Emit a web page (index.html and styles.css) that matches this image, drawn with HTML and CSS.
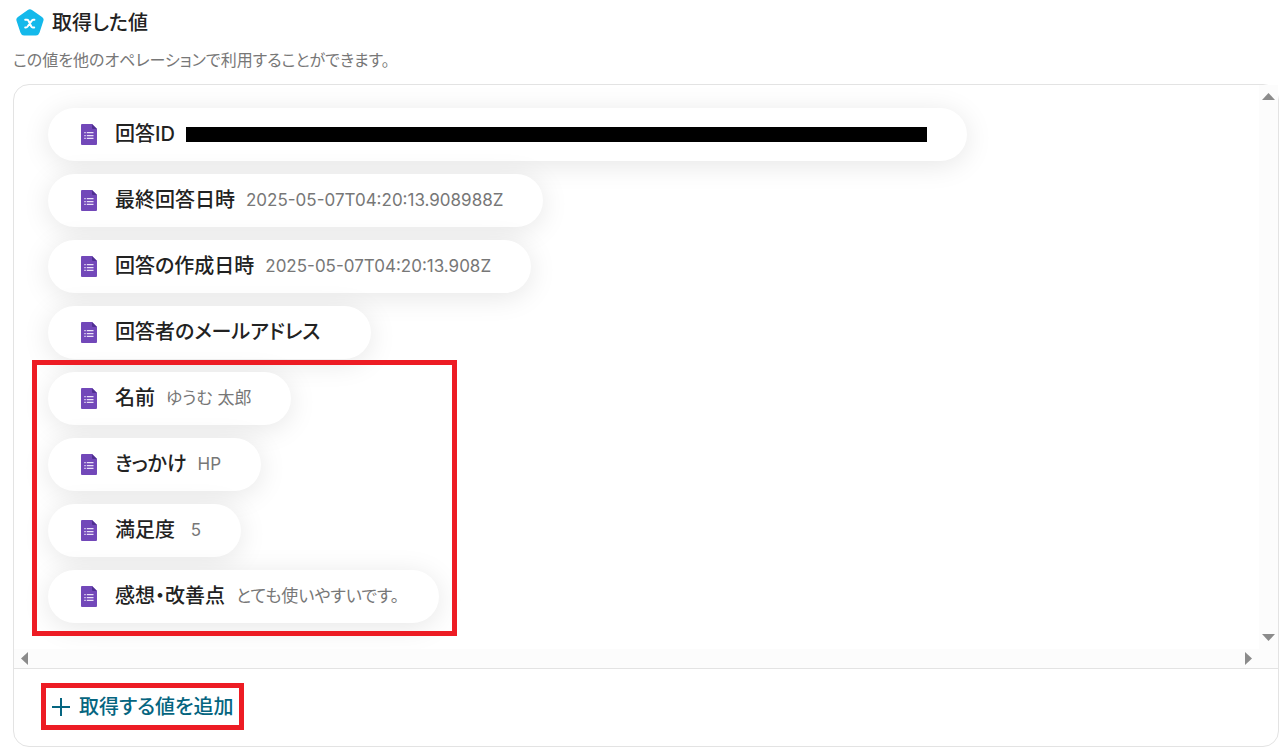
FILE: index.html
```html
<!DOCTYPE html>
<html lang="ja">
<head>
<meta charset="utf-8">
<meta name="viewport" content="width=device-width, initial-scale=1">
<title>取得した値</title>
<link rel="stylesheet" href="styles.css">
</head>
<body>
<svg class="sprite" aria-hidden="true">
  <symbol id="form" viewBox="0 0 16 21">
    <path fill="#7248b9" d="M1.300 0H11l5 5v14.700c0 .8-.5 1.300-1.300 1.300H1.300C.5 21 0 20.500 0 19.700V1.300C0 .5.5 0 1.300 0z"/>
    <path fill="#4f2f91" d="M11 0l5 5h-3.700C11.500 5 11 4.500 11 3.700z"/>
    <path fill="#e9dff7" d="M3.300 8h1.400v1.300H3.300zM5.800 8h6.700v1.300H5.800zM3.300 10.900h1.400v1.300H3.300zM5.800 10.900h6.700v1.300H5.800zM3.300 13.800h1.400v1.300H3.300zM5.800 13.800h6.700v1.300H5.800z"/>
  </symbol>
</svg>
<main class="page">
  <header class="head">
    <svg class="logo" viewBox="0 0 28 27" aria-hidden="true">
      <path fill="#14b9eb" d="M11.800.900Q13.900-.600 16 .900L26 7.900Q28.200 9.400 27.400 11.700L23.500 23.800Q22.600 26.500 20 26.500H8Q5.400 26.500 4.500 23.800L.5 11.700Q-.2 9.400 1.900 7.900z"/>
      <path fill="none" stroke="#fff" stroke-width="2" stroke-linecap="round" stroke-linejoin="round" d="M9.200 10.700H11Q11.900 10.700 12.400 11.600L15.300 17.500Q15.800 18.400 16.700 18.400H18.200M18.400 10.700H17.500Q16.500 10.700 15.800 11.600L11.600 17.500Q10.900 18.400 9.900 18.400H9.200"/>
    </svg>
    <h1 class="title">取得した値</h1>
  </header>
  <p class="lead">この値を他のオペレーションで利用することができます。</p>
  <section class="panel">
    <div class="viewer">
      <div class="content">
        <div class="pill"><svg class="icon"><use href="#form"/></svg><span class="name">回答ID</span><span class="masked"></span></div>
        <div class="pill"><svg class="icon"><use href="#form"/></svg><span class="name">最終回答日時</span><span class="value">2025-05-07T04:20:13.908988Z</span></div>
        <div class="pill"><svg class="icon"><use href="#form"/></svg><span class="name">回答の作成日時</span><span class="value">2025-05-07T04:20:13.908Z</span></div>
        <div class="pill"><svg class="icon"><use href="#form"/></svg><span class="name">回答者のメールアドレス</span><span class="value"></span></div>
        <div class="group">
          <div class="pill"><svg class="icon"><use href="#form"/></svg><span class="name">名前</span><span class="value">ゆうむ 太郎</span></div>
          <div class="pill"><svg class="icon"><use href="#form"/></svg><span class="name">きっかけ</span><span class="value">HP</span></div>
          <div class="pill"><svg class="icon"><use href="#form"/></svg><span class="name">満足度</span><span class="value">&nbsp;5</span></div>
          <div class="pill"><svg class="icon"><use href="#form"/></svg><span class="name">感想・改善点</span><span class="value">とても使いやすいです。</span></div>
        </div>
      </div>
      <div class="bar bar-y" aria-hidden="true">
        <svg class="arrow" viewBox="0 0 13 13"><path d="M6.500 3l6.500 7H0z"/></svg>
        <svg class="arrow" viewBox="0 0 13 13"><path d="M6.500 10l6.500-7H0z"/></svg>
      </div>
      <div class="bar bar-x" aria-hidden="true">
        <svg class="arrow" viewBox="0 0 13 13"><path d="M3 6.500L10 0v13z"/></svg>
        <svg class="arrow" viewBox="0 0 13 13"><path d="M10 6.500L3 0v13z"/></svg>
      </div>
      <div class="bar"></div>
    </div>
    <footer class="foot">
      <button class="add" type="button"><svg class="plus" viewBox="0 0 18 18" aria-hidden="true"><path d="M9 0v18M0 9h18"/></svg>取得する値を追加</button>
    </footer>
  </section>
</main>
</body>
</html>
```
FILE: styles.css
```css
* { box-sizing: border-box; }
body {
  margin: 0;
  background: #fff;
  color: #222;
  font-family: Inter, "Noto Sans CJK JP", sans-serif;
  font-feature-settings: "palt";
}
.sprite { position: absolute; width: 0; height: 0; }
.page { padding: 8px 7px 5px 13px; }
.head { display: flex; align-items: center; gap: 8px; padding-left: 3px; height: 29px; }
.logo { width: 28px; height: 27px; }
.title { margin: 0; font-size: 20px; line-height: 28px; font-weight: 500; }
.lead { margin: 13px 0 14px; font-size: 16px; line-height: 20px; color: #777; }
.panel { border: 1px solid #e3e3e3; border-radius: 16px; }
.viewer { display: grid; grid-template-columns: 1fr 19px; grid-template-rows: auto 19px; }
.content {
  display: flex;
  flex-direction: column;
  align-items: flex-start;
  gap: 13px;
  min-width: 0;
  padding: 23px 34px 26px;
  overflow: hidden;
  border-radius: 16px 0 0 0;
}
.group {
  position: relative;
  display: flex;
  flex-direction: column;
  align-items: flex-start;
  gap: 13px;
}
.group::after {
  content: "";
  position: absolute;
  inset: -12px -18px -13px -16px;
  border: 5px solid #ed1c24;
}
.pill {
  display: flex;
  align-items: center;
  gap: 11px;
  height: 53px;
  padding: 0 40px 0 33px;
  border-radius: 27px;
  background: #fff;
  box-shadow: 0 4px 28px rgba(0, 0, 0, 0.1);
  white-space: nowrap;
}
.icon { width: 16px; height: 21px; margin-right: 7px; }
.name { padding-bottom: 1px; font-size: 20px; line-height: 28px; font-weight: 500; }
.value { padding-bottom: 2px; font-size: 17px; line-height: 24px; color: #777; }
.masked { width: 741px; height: 15px; background: #000; }
.bar { display: flex; justify-content: space-between; align-items: center; background: #fcfcfc; }
.bar-y { flex-direction: column; padding: 5px 0; }
.bar-x { padding: 0 4px; }
.arrow { width: 13px; height: 13px; fill: #8b8b8b; }
.foot { border-top: 1px solid #e3e3e3; padding: 14px 27px 16px; }
.add {
  display: flex;
  align-items: center;
  gap: 9px;
  height: 47px;
  padding: 0 6px;
  border: 5px solid #ed1c24;
  background: #fff;
  color: #056580;
  font: inherit;
  font-size: 20px;
  font-weight: 500;
  line-height: 28px;
}
.plus { width: 18px; height: 18px; fill: none; stroke: currentColor; stroke-width: 2; }
```
